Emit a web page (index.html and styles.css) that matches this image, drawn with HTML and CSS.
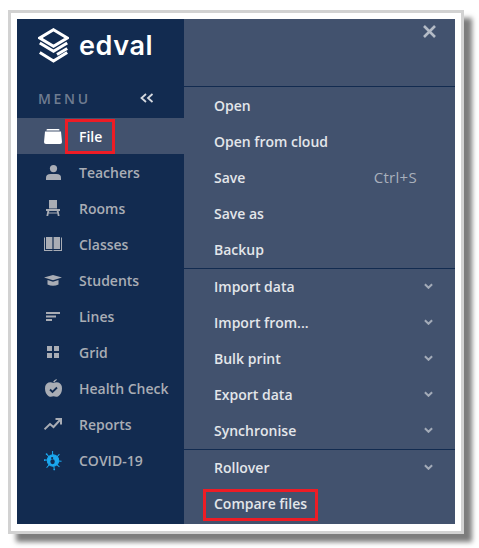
FILE: index.html
```html
<!DOCTYPE html>
<html lang="en">

<head>
  <meta charset="UTF-8">
  <title>Edval - File menu</title>
  <link rel="stylesheet" href="styles.css">
</head>

<body>
  <div class="frame">
    <div class="app">
      <aside class="sidebar">
        <div class="logo">
          <svg class="logo-mark" width="31" height="35" viewBox="0 0 31 35" fill="none" stroke="#fff" stroke-width="3">
            <path d="M15.5 1.7 L29.2 10 L15.5 18.3 L1.8 10 Z" />
            <path d="M1.8 15 L15.5 23.3 L29.2 15" />
            <path d="M29.2 20.5 L19 26.5" />
            <path d="M1.8 24.5 L15.5 33 L29.2 24.5" />
          </svg>
          <span class="logo-text">edval</span>
        </div>
        <div class="menu-head">
          <span>MENU</span>
          <svg width="14" height="10" viewBox="0 0 14 10" fill="none" stroke="#d5d9df" stroke-width="1.8">
            <path d="M6 1 L1.5 5 L6 9" />
            <path d="M12.5 1 L8 5 L12.5 9" />
          </svg>
        </div>
        <nav class="nav">
          <a class="nav-item active">
            <span class="nav-icon">
              <svg width="18" height="15" viewBox="0 0 18 15" fill="#fff">
                <path d="M3.5 0 H14.5 Q15.5 0 15.5 1 V1.6 H2.5 V1 Q2.5 0 3.5 0 Z" />
                <path d="M1 2.6 H17 L18 13 Q18 15 16 15 H2 Q0 15 0 13 Z" />
              </svg>
            </span>
            <span class="file-label">File</span>
          </a>
          <a class="nav-item">
            <span class="nav-icon">
              <svg width="15" height="15" viewBox="0 0 15 15" fill="#a9adb5">
                <circle cx="7.5" cy="3.6" r="3.6" />
                <path d="M0 15 V12.5 Q0 9 4.5 9 H10.5 Q15 9 15 12.5 V15 Z" />
              </svg>
            </span>
            <span>Teachers</span>
          </a>
          <a class="nav-item">
            <span class="nav-icon">
              <svg width="14" height="16" viewBox="0 0 14 16" fill="#a9adb5">
                <path d="M3 0 H11 V8.5 H3 Z" />
                <path d="M0 9 H14 V11 H12.6 L13.6 16 H11.8 L11.3 13.6 H2.7 L2.2 16 H0.4 L1.4 11 H0 Z M3.3 11 L3 12.4 H11 L10.7 11 Z" fill-rule="evenodd" />
              </svg>
            </span>
            <span>Rooms</span>
          </a>
          <a class="nav-item">
            <span class="nav-icon">
              <svg width="18" height="14" viewBox="0 0 18 14" fill="#a9adb5">
                <path d="M0 0.5 H1 V13 H8.5 V14 H0 Z M9.5 13 H17 V0.5 H18 V14 H9.5 Z" />
                <path d="M2 0 H8.4 V12 H2 Z M9.6 0 H16 V12 H9.6 Z" />
              </svg>
            </span>
            <span>Classes</span>
          </a>
          <a class="nav-item">
            <span class="nav-icon">
              <svg width="18" height="11" viewBox="0 0 18 11" fill="#a9adb5">
                <path d="M9 0 L18 2.5 L9 5.2 L0 2.5 Z" />
                <path d="M3.5 5 L9 6.7 L14.5 5 V9.5 Q9 12 3.5 9.5 Z" />
              </svg>
            </span>
            <span>Students</span>
          </a>
          <a class="nav-item">
            <span class="nav-icon">
              <svg width="14" height="9" viewBox="0 0 14 9" fill="#a9adb5">
                <rect x="0" y="0" width="14" height="2" />
                <rect x="0" y="3.5" width="10" height="2" />
                <rect x="0" y="7" width="6" height="2" />
              </svg>
            </span>
            <span>Lines</span>
          </a>
          <a class="nav-item">
            <span class="nav-icon">
              <svg width="12" height="12" viewBox="0 0 12 12" fill="#a9adb5">
                <rect x="0" y="0" width="5" height="5" />
                <rect x="7" y="0" width="5" height="5" />
                <rect x="0" y="7" width="5" height="5" />
                <rect x="7" y="7" width="5" height="5" />
              </svg>
            </span>
            <span>Grid</span>
          </a>
          <a class="nav-item">
            <span class="nav-icon">
              <svg width="17" height="18" viewBox="0 0 17 18" fill="#a9adb5">
                <path d="M8 3 Q9 1 11.5 0 L11.8 1 Q10 2 9.3 3.6 Z" />
                <path d="M8.5 4 Q11 2.8 13.5 3.6 Q17 5 17 9.5 Q17 15 13 17.5 Q10.5 18 8.5 17.2 Q6.5 18 4 17.5 Q0 15 0 9.5 Q0 5 3.5 3.6 Q6 2.8 8.5 4 Z" />
                <path d="M5 10.5 L7.5 13 L12 8.5" fill="none" stroke="#122b50" stroke-width="1.8" />
              </svg>
            </span>
            <span>Health Check</span>
          </a>
          <a class="nav-item">
            <span class="nav-icon">
              <svg width="18" height="12" viewBox="0 0 18 12" fill="none" stroke="#a9adb5" stroke-width="2">
                <path d="M0.5 11.3 L6 6 L9.5 9 L16 2" />
                <path d="M11.5 1 H17 V6.5" />
              </svg>
            </span>
            <span>Reports</span>
          </a>
          <a class="nav-item">
            <span class="nav-icon">
              <svg width="21" height="23" viewBox="0 0 21 23" fill="none" stroke="#1ba8ef" stroke-width="1.2">
                <path d="M10 0.5 V6 M11.5 18 L12 22.5 M0.5 11 H5 M16 12 L20.5 12.5 M3 4 L6.5 8 M18 4 L14.5 8 M3 20 L6.5 16 M18 19 L14.5 16" />
                <circle cx="10.5" cy="11.5" r="6.7" fill="#1ba8ef" />
                <circle cx="9.5" cy="8.6" r="1.3" fill="#122b50" stroke="none" />
                <ellipse cx="10" cy="13" rx="2.6" ry="2.9" fill="#122b50" stroke="none" />
                <circle cx="3" cy="4" r="1" fill="#1ba8ef" stroke="none" />
                <circle cx="12" cy="22" r="1" fill="#1ba8ef" stroke="none" />
                <circle cx="0.8" cy="11" r="1" fill="#1ba8ef" stroke="none" />
              </svg>
            </span>
            <span>COVID-19</span>
          </a>
        </nav>
      </aside>

      <section class="panel">
        <div class="panel-top">
          <svg class="close" width="13" height="13" viewBox="0 0 13 13" stroke="#b4bbc6" stroke-width="2.6">
            <path d="M1 1 L12 12 M12 1 L1 12" />
          </svg>
        </div>
        <div class="group group-first">
          <div class="row">Open</div>
          <div class="row">Open from cloud</div>
          <div class="row">Save<span class="shortcut">Ctrl+S</span></div>
          <div class="row">Save as</div>
          <div class="row">Backup</div>
        </div>
        <div class="group">
          <div class="row">Import data<svg class="chev" viewBox="0 0 10 6"><path d="M1 1 L5 5 L9 1" /></svg></div>
          <div class="row">Import from...<svg class="chev" viewBox="0 0 10 6"><path d="M1 1 L5 5 L9 1" /></svg></div>
          <div class="row">Bulk print<svg class="chev" viewBox="0 0 10 6"><path d="M1 1 L5 5 L9 1" /></svg></div>
          <div class="row">Export data<svg class="chev" viewBox="0 0 10 6"><path d="M1 1 L5 5 L9 1" /></svg></div>
          <div class="row">Synchronise<svg class="chev" viewBox="0 0 10 6"><path d="M1 1 L5 5 L9 1" /></svg></div>
        </div>
        <div class="group">
          <div class="row">Rollover<svg class="chev" viewBox="0 0 10 6"><path d="M1 1 L5 5 L9 1" /></svg></div>
          <div class="row"><span class="compare-label">Compare files</span></div>
        </div>
      </section>
    </div>
  </div>
</body>

</html>
```

FILE: styles.css
```css
html,
body {
  margin: 0;
  height: 100%;
  overflow: hidden;
  background: #fff;
}

body {
  font-family: "Open Sans", "Noto Sans", Arial, sans-serif;
}

.frame {
  width: 456px;
  height: 524px;
  box-sizing: border-box;
  margin: 10px 0 0 8px;
  padding: 6px;
  background: #fff;
  border: 3px solid #d2d2d2;
  box-shadow: 8px 8px 5px #7c7c7c;
}

.app {
  display: flex;
  height: 505px;
}

.sidebar {
  width: 167px;
  background: #122b50;
  flex-shrink: 0;
}

.logo {
  display: flex;
  align-items: center;
  gap: 10px;
  height: 59px;
  box-sizing: border-box;
  padding: 0 0 7px 21px;
}

.logo-text {
  color: #fff;
  font-family: "Inter", "Open Sans", sans-serif;
  font-size: 27px;
  font-weight: 600;
  letter-spacing: 0.6px;
}

.menu-head {
  display: flex;
  align-items: center;
  justify-content: space-between;
  height: 40px;
  padding: 0 30px 0 21px;
  color: #6f7c90;
  font-size: 14px;
  font-weight: 600;
  letter-spacing: 2.7px;
}

.nav-item {
  display: flex;
  align-items: center;
  height: 36px;
  color: #a9adb5;
  font-size: 14px;
  font-weight: 600;
}

.nav-item.active {
  background: #42526e;
  color: #fff;
}

.nav-icon {
  display: flex;
  justify-content: center;
  width: 18px;
  margin: 0 17px 0 27px;
}

.file-label {
  position: relative;
}

.file-label::after {
  content: "";
  position: absolute;
  left: -14px;
  right: -13px;
  top: -8px;
  bottom: -8px;
  border: 3px solid #ee1c25;
}

.panel {
  flex: 1;
  background: #42526e;
  color: #e3e6ea;
  font-size: 14px;
  font-weight: 600;
}

.panel-top {
  display: flex;
  justify-content: flex-end;
  height: 68px;
  padding: 6px 19px 0 0;
  box-sizing: border-box;
  border-bottom: 1px solid #122b50;
}

.close {
  display: block;
}

.group {
  border-bottom: 1px solid #122b50;
}

.group:last-child {
  border-bottom: none;
}

.row {
  display: flex;
  align-items: center;
  justify-content: space-between;
  height: 36px;
  padding: 0 22px 0 30px;
}

.group-first .row {
  height: 36.2px;
}

.shortcut {
  color: #a9b0bc;
  font-size: 15px;
  font-weight: 400;
  letter-spacing: 0.3px;
  margin-right: 16px;
}

.chev {
  width: 9px;
  height: 6px;
  margin-bottom: 2px;
  fill: none;
  stroke: #a3abb8;
  stroke-width: 2.2;
}

.compare-label {
  position: relative;
}

.compare-label::after {
  content: "";
  position: absolute;
  left: -11px;
  right: -11px;
  top: -5px;
  bottom: -8px;
  border: 3px solid #ee1c25;
}
```
